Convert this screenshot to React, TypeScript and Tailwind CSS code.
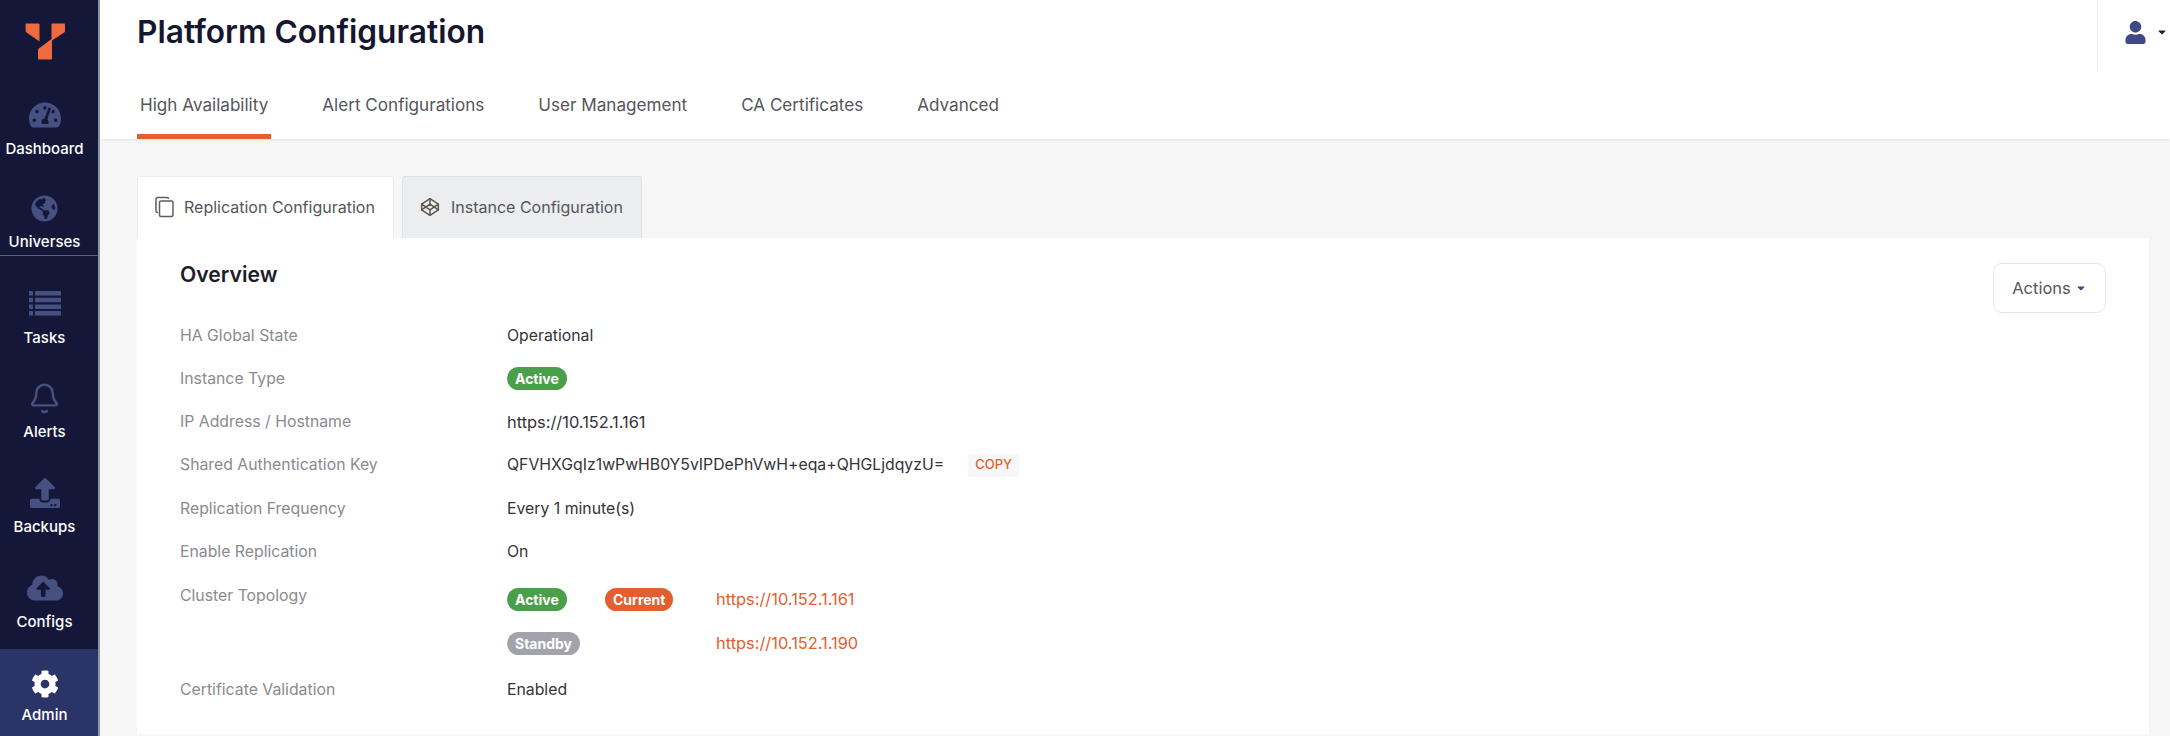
import { Bell, Codepen } from "lucide-react";
import {
  FaCaretDown,
  FaCloudUploadAlt,
  FaCog,
  FaGlobeAmericas,
  FaTachometerAlt,
  FaUpload,
  FaUser,
} from "react-icons/fa";

function ListIcon() {
  return (
    <svg viewBox="0 0 32 25" className="h-[25px] w-[32px]" fill="currentColor" aria-hidden="true">
      <rect x="0" y="0" width="4" height="4.500" rx="0.5" />
      <rect x="6" y="0" width="26" height="4.500" rx="0.5" />
      <rect x="0" y="6.700" width="4" height="4.500" rx="0.5" />
      <rect x="6" y="6.700" width="26" height="4.500" rx="0.5" />
      <rect x="0" y="13.400" width="4" height="4.500" rx="0.5" />
      <rect x="6" y="13.400" width="26" height="4.500" rx="0.5" />
      <rect x="0" y="20.100" width="4" height="4.500" rx="0.5" />
      <rect x="6" y="20.100" width="26" height="4.500" rx="0.5" />
    </svg>
  );
}

function ThinBell() {
  return <Bell size={33} strokeWidth={1.8} />;
}

const navItems = [
  { label: "Dashboard", icon: FaTachometerAlt, size: "text-[32px]" },
  { label: "Universes", icon: FaGlobeAmericas, size: "text-[27px]" },
  { label: "Tasks", icon: ListIcon, size: "text-[32px]" },
  { label: "Alerts", icon: ThinBell, size: "text-[30px]" },
  { label: "Backups", icon: FaUpload, size: "text-[30px]" },
  { label: "Configs", icon: FaCloudUploadAlt, size: "text-[36px]" },
];

const topTabs = ["High Availability", "Alert Configurations", "User Management", "CA Certificates", "Advanced"];

function Logo() {
  return (
    <svg viewBox="0 0 44 40" className="h-[40px] w-[44px]" aria-hidden="true">
      <path
        fill="#ef6a41"
        d="M3 1.500h12.500a1 1 0 0 1 1 1V19.500L3.500 10.500a1.500 1.500 0 0 1-.9-1.400V2a.6.6 0 0 1 .4-.5z"
      />
      <path
        fill="#ef6a41"
        d="M29.500 1.500H41a1 1 0 0 1 1 1V9a2 2 0 0 1-.9 1.600L29 18.500V36.500a1 1 0 0 1-1 1H16a1 1 0 0 1-1-1V28a2 2 0 0 1 .9-1.600L28.500 17V2.500a1 1 0 0 1 1-1z"
      />
    </svg>
  );
}

function CopyIcon() {
  return (
    <svg viewBox="0 0 20 22" className="h-[22px] w-[20px]" fill="none" stroke="#5f5f63" strokeWidth="1.5" aria-hidden="true">
      <path d="M3 16.500H2.500A1.500 1.500 0 0 1 1 15V3a1.500 1.500 0 0 1 1.500-1.500H12A1.500 1.500 0 0 1 13.500 3" />
      <rect x="4.500" y="5" width="13.500" height="15.500" rx="1.500" />
    </svg>
  );
}

function Badge({ text, color }: { text: string; color: string }) {
  return (
    <span className={`inline-flex h-[23px] items-center rounded-full px-[8px] text-[14px] font-bold text-white ${color}`}>
      {text}
    </span>
  );
}

function Row({ label, children }: { label: string; children: React.ReactNode }) {
  return (
    <div className="flex h-[43.200px] items-center">
      <div className="w-[327px] shrink-0 text-[#8a8a8f]">{label}</div>
      <div className="flex items-center text-[#333338]">{children}</div>
    </div>
  );
}

export default function App() {
  return (
    <div className="flex h-[736px] w-[2170px] overflow-hidden bg-[#f6f6f7] font-['Inter',sans-serif] text-[15.800px]">
      <aside className="flex w-[100px] shrink-0 flex-col border-r-2 border-[#8f93a8] bg-[#151738]">
        <div className="flex h-[67px] shrink-0 items-start justify-center pr-[9px] pt-[22px]">
          <Logo />
        </div>
        <nav className="flex flex-1 flex-col">
          {navItems.map((item, i) => {
            const Icon = item.icon;
            return (
              <div
                key={item.label}
                className={`flex h-[94.600px] flex-col items-center justify-end pb-[3px] pr-[9px] ${i === 1 ? "border-b border-[#5a5d78]" : ""}`}
              >
                <div className={`flex h-[40px] items-center text-[#465081] ${item.size}`}>
                  <Icon />
                </div>
                <div className="mt-[4px] text-[15px] font-medium leading-[20px] text-white">{item.label}</div>
              </div>
            );
          })}
          <div className="flex-1" />
          <div className="flex h-[87px] flex-col items-center justify-end bg-[#2b3467] pb-[11px] pr-[9px]">
            <FaCog className="text-[28px] text-white" />
            <div className="mt-[7px] text-[15px] font-medium leading-[20px] text-white">Admin</div>
          </div>
        </nav>
      </aside>

      <main className="flex min-w-0 flex-1 flex-col">
        <header className="h-[139px] shrink-0 bg-white shadow-[0_1px_3px_rgba(0,0,0,0.08)]">
          <div className="flex h-[91px] items-start justify-between pl-[37px]">
            <h1 className="pt-[12px] text-[31.700px] font-semibold leading-[40px] text-[#151730]">Platform Configuration</h1>
            <div className="flex h-[70px] w-[73px] items-center border-l border-[#f1f1f3] pb-[6px] pl-[26px]">
              <FaUser className="text-[23px] text-[#3f4a85]" />
              <FaCaretDown className="ml-[9px] text-[12px] text-[#222]" />
            </div>
          </div>
          <div className="flex h-[48px] gap-[48px] pl-[37px]">
            {topTabs.map((tab, i) => (
              <div
                key={tab}
                className={`flex h-[48px] items-start px-[3px] pt-[3px] text-[17.100px] leading-[22px] text-[#55555a] ${i === 0 ? "border-b-[5px] border-[#e2602f]" : ""}`}
              >
                {tab}
              </div>
            ))}
          </div>
        </header>

        <div className="flex flex-1 flex-col pb-[2px] pl-[37px] pr-[21px] pt-[37px]">
          <div className="flex h-[62px] gap-[8px]">
            <div className="flex w-[257px] items-center gap-[9px] rounded-t-[3px] border border-b-0 border-[#ececee] bg-white pb-[1px] pl-[17px] text-[16px] text-[#55555a]">
              <CopyIcon />
              Replication Configuration
            </div>
            <div className="flex w-[240px] items-center gap-[11px] rounded-t-[3px] border border-b-0 border-[#e2e2e5] bg-[#ecedef] pb-[1px] pl-[17px] text-[16px] text-[#55555a]">
              <Codepen size={20} strokeWidth={1.8} className="text-[#5e574c]" />
              Instance Configuration
            </div>
          </div>

          <section className="relative flex-1 bg-white pl-[43px] pt-[22px]">
            <h2 className="text-[21.200px] font-semibold leading-[28px] text-[#1d1d2b]">Overview</h2>
            <button className="absolute right-[43px] top-[25px] flex h-[50px] w-[113px] items-center justify-center gap-[4px] rounded-[9px] border border-[#e6e6e8] text-[16.500px] text-[#55555a]">
              Actions
              <FaCaretDown className="text-[12px] text-[#3f4a85]" />
            </button>

            <div className="mt-[26px]">
              <Row label="HA Global State">Operational</Row>
              <Row label="Instance Type">
                <Badge text="Active" color="bg-[#4a9f4a]" />
              </Row>
              <Row label="IP Address / Hostname">
                <span className="text-[16.400px]">https://10.152.1.161</span>
              </Row>
              <Row label="Shared Authentication Key">
                QFVHXGqIz1wPwHB0Y5vIPDePhVwH+eqa+QHGLjdqyzU=
                <span className="ml-[24px] flex h-[23px] items-center rounded-[3px] bg-[#f7f7f8] px-[7px] text-[13px] font-medium text-[#e2602f]">
                  COPY
                </span>
              </Row>
              <Row label="Replication Frequency">Every 1 minute(s)</Row>
              <Row label="Enable Replication">On</Row>

              <div className="flex h-[95px] items-start">
                <div className="w-[327px] shrink-0 pt-[11px] text-[#8a8a8f]">Cluster Topology</div>
                <div className="flex flex-col pt-[4px] text-[16.400px] text-[#e2602f]">
                  <div className="flex h-[44px] items-center">
                    <div className="w-[98px]">
                      <Badge text="Active" color="bg-[#4a9f4a]" />
                    </div>
                    <div className="w-[111px]">
                      <Badge text="Current" color="bg-[#e2602f]" />
                    </div>
                    https://10.152.1.161
                  </div>
                  <div className="flex h-[44px] items-center">
                    <div className="w-[209px]">
                      <Badge text="Standby" color="bg-[#a3a3ab]" />
                    </div>
                    https://10.152.1.190
                  </div>
                </div>
              </div>

              <Row label="Certificate Validation">Enabled</Row>
            </div>
          </section>
        </div>
      </main>
    </div>
  );
}
